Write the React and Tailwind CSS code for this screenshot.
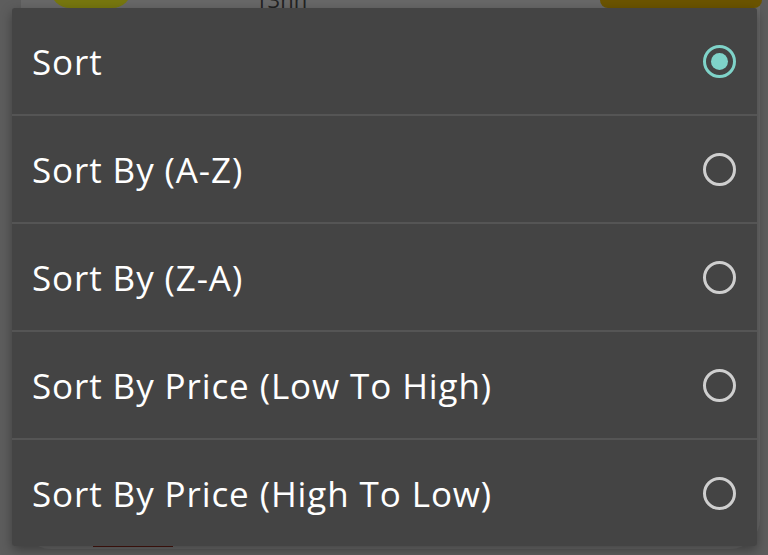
import { useState } from 'react'

const options = [
  'Sort',
  'Sort By (A-Z)',
  'Sort By (Z-A)',
  'Sort By Price (Low To High)',
  'Sort By Price (High To Low)',
]

function Radio({ checked }) {
  return checked ? (
    <span className="flex items-center justify-center w-[33px] h-[33px] rounded-full border-[3px] border-[#7fd3c9]">
      <span className="w-[17px] h-[17px] rounded-full bg-[#7fd3c9]" />
    </span>
  ) : (
    <span className="w-[33px] h-[33px] rounded-full border-[3px] border-[#cfcfcf]" />
  )
}

export default function App() {
  const [selected, setSelected] = useState(0)

  return (
    <div className="relative w-[768px] h-[555px] overflow-hidden bg-[#5d5d5d] font-['Open_Sans',sans-serif]">
      {/* dimmed page behind the sheet */}
      <div className="ml-[21px] mr-[8px] h-[549px] bg-[#686868] rounded-b-[30px] flex flex-col justify-between">
        <div className="flex items-start h-[8px]">
          <div className="ml-[29px] w-[82px] h-[20px] -mt-[12px] rounded-b-[30px] bg-[#77770f]" />
          <div className="ml-[123px] -mt-[12px] text-[22px] leading-none text-[#222] underline">13nn</div>
          <div className="ml-auto mr-[-2px] w-[162px] h-[8px] rounded-b-[10px] bg-[#6b5400]" />
        </div>
        <div className="ml-[72px] w-[80px] h-[2px] mb-[2px] bg-[#4a1610]" />
      </div>

      {/* Sort sheet */}
      <div className="absolute left-[12px] top-[8px] w-[745px] bg-[#555] rounded-[3px] shadow-[0_4px_12px_rgba(0,0,0,0.35)] flex flex-col gap-[2px] overflow-hidden">
        {options.map((label, i) => (
          <button
            key={label}
            onClick={() => setSelected(i)}
            className="h-[106px] flex items-center justify-between bg-[#444] pl-[20px] pr-[21px] text-left"
          >
            <span className="text-[35px] text-white leading-none tracking-[0.9px]">{label}</span>
            <Radio checked={selected === i} />
          </button>
        ))}
      </div>
    </div>
  )
}
